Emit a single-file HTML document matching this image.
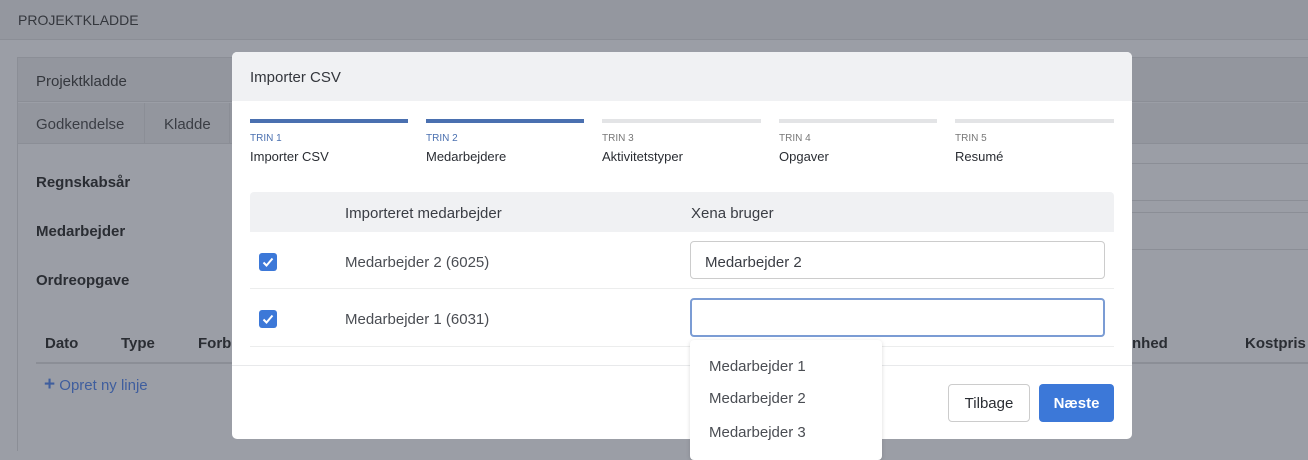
<!DOCTYPE html>
<html><head><meta charset="utf-8"><style>
*{box-sizing:border-box;margin:0;padding:0}
body{width:1308px;height:451px;overflow:hidden;background:#9b9ea6;font-family:"Liberation Sans",sans-serif;position:relative;color:#2a2d33}
.a{position:absolute}
</style></head><body>
<div class="a" style="left:0;top:0;width:1308px;height:40px;background:#94979f;border-bottom:1px solid #8b8e96"></div>
<div class="a" style="left:18px;top:12px;font-size:14px;color:#34373d">PROJEKTKLADDE</div>
<div class="a" style="left:17px;top:57px;width:1291px;height:394px;border-left:1px solid #8b8e96;border-top:1px solid #8b8e96"></div>
<div class="a" style="left:18px;top:58px;width:1290px;height:44px;background:#93969e;border-bottom:1px solid #8b8e96"></div>
<div class="a" style="left:36px;top:73px;font-size:15px;color:#34373d">Projektkladde</div>
<div class="a" style="left:18px;top:103px;width:1290px;height:41px;background:#93969e;border-bottom:1px solid #8b8e96"></div>
<div class="a" style="left:144px;top:103px;width:1px;height:41px;background:#8b8e96"></div>
<div class="a" style="left:229px;top:103px;width:1px;height:41px;background:#8b8e96"></div>
<div class="a" style="left:36px;top:116px;font-size:15px;color:#3a3d44">Godkendelse</div>
<div class="a" style="left:164px;top:116px;font-size:15px;color:#3a3d44">Kladde</div>
<div class="a" style="left:36px;top:174px;font-size:15px"><b>Regnskabsår</b></div>
<div class="a" style="left:36px;top:223px;font-size:15px"><b>Medarbejder</b></div>
<div class="a" style="left:36px;top:272px;font-size:15px"><b>Ordreopgave</b></div>
<div class="a" style="left:45px;top:335px;font-size:15px"><b>Dato</b></div>
<div class="a" style="left:121px;top:335px;font-size:15px"><b>Type</b></div>
<div class="a" style="left:198px;top:335px;font-size:15px"><b>Forb</b></div>
<div class="a" style="left:1132px;top:335px;font-size:15px"><b>nhed</b></div>
<div class="a" style="left:1245px;top:335px;font-size:15px"><b>Kostpris</b></div>
<div class="a" style="left:36px;top:362px;width:1272px;height:2px;background:#8b8e96"></div>
<div class="a" style="left:44px;top:377px;font-size:15px;color:#3f5e9e"><b style="font-size:19px;line-height:15px">+</b> Opret ny linje</div>
<div class="a" style="left:1132px;top:163px;width:176px;height:1px;background:#8b8e96"></div>
<div class="a" style="left:1132px;top:200px;width:176px;height:1px;background:#8b8e96"></div>
<div class="a" style="left:1132px;top:212px;width:176px;height:1px;background:#8b8e96"></div>
<div class="a" style="left:1132px;top:249px;width:176px;height:1px;background:#8b8e96"></div>

<div class="a" style="left:232px;top:52px;width:900px;height:387px;background:#fff;border-radius:5px;overflow:hidden">
 <div class="a" style="left:0;top:0;width:900px;height:49px;background:#f0f1f3"></div>
 <div class="a" style="left:18px;top:17px;font-size:15px;color:#33363c">Importer CSV</div>
 <div class="a" style="left:18px;top:67px;width:158px;height:4px;background:#4a70b0"></div>
 <div class="a" style="left:194px;top:67px;width:158px;height:4px;background:#4a70b0"></div>
 <div class="a" style="left:370px;top:67px;width:159px;height:4px;background:#e3e4e6"></div>
 <div class="a" style="left:547px;top:67px;width:158px;height:4px;background:#e3e4e6"></div>
 <div class="a" style="left:723px;top:67px;width:159px;height:4px;background:#e3e4e6"></div>
 <div class="a" style="left:18px;top:81px;font-size:10px;color:#4a70b0">TRIN 1</div>
 <div class="a" style="left:18px;top:97px;font-size:13px;color:#2a2d33">Importer CSV</div>
 <div class="a" style="left:194px;top:81px;font-size:10px;color:#4a70b0">TRIN 2</div>
 <div class="a" style="left:194px;top:97px;font-size:13px;color:#2a2d33">Medarbejdere</div>
 <div class="a" style="left:370px;top:81px;font-size:10px;color:#777">TRIN 3</div>
 <div class="a" style="left:370px;top:97px;font-size:13px;color:#2a2d33">Aktivitetstyper</div>
 <div class="a" style="left:547px;top:81px;font-size:10px;color:#777">TRIN 4</div>
 <div class="a" style="left:547px;top:97px;font-size:13px;color:#2a2d33">Opgaver</div>
 <div class="a" style="left:723px;top:81px;font-size:10px;color:#777">TRIN 5</div>
 <div class="a" style="left:723px;top:97px;font-size:13px;color:#2a2d33">Resumé</div>
 <div class="a" style="left:18px;top:140px;width:864px;height:40px;background:#f0f1f3;border-radius:4px 4px 0 0"></div>
 <div class="a" style="left:113px;top:153px;font-size:15px;color:#3a3d44">Importeret medarbejder</div>
 <div class="a" style="left:459px;top:153px;font-size:15px;color:#3a3d44">Xena bruger</div>
 <div class="a" style="left:18px;top:236px;width:864px;height:1px;background:#eceded"></div>
 <div class="a" style="left:18px;top:294px;width:864px;height:1px;background:#eceded"></div>
 <div class="a" style="left:0;top:313px;width:900px;height:1px;background:#e8e9eb"></div>
 <div class="a" style="left:27px;top:201px;width:18px;height:18px;background:#3c78d8;border-radius:3px"><svg width="18" height="18"><path d="M4.5 9.5l3 3 6-7" stroke="#fff" stroke-width="2" fill="none"/></svg></div>
 <div class="a" style="left:27px;top:258px;width:18px;height:18px;background:#3c78d8;border-radius:3px"><svg width="18" height="18"><path d="M4.5 9.5l3 3 6-7" stroke="#fff" stroke-width="2" fill="none"/></svg></div>
 <div class="a" style="left:113px;top:202px;font-size:15px;color:#4a4d53">Medarbejder 2 (6025)</div>
 <div class="a" style="left:113px;top:259px;font-size:15px;color:#4a4d53">Medarbejder 1 (6031)</div>
 <div class="a" style="left:458px;top:189px;width:415px;height:38px;border:1px solid #ccc;border-radius:4px"></div>
 <div class="a" style="left:473px;top:202px;font-size:15px;color:#3a3d44">Medarbejder 2</div>
 <div class="a" style="left:458px;top:246px;width:415px;height:39px;border:2px solid #7b9cd4;border-radius:4px"></div>
 <div class="a" style="left:716px;top:332px;width:82px;height:38px;border:1px solid #ccc;border-radius:4px;font-size:15px;text-align:center;line-height:38px;color:#2a2d33">Tilbage</div>
 <div class="a" style="left:807px;top:332px;width:75px;height:38px;background:#3c78d8;border-radius:4px;font-size:15px;text-align:center;line-height:39px;color:#fff;font-weight:bold">Næste</div>
</div>
<div class="a" style="left:690px;top:340px;width:192px;height:120px;background:#fff;border-radius:4px;box-shadow:0 1px 4px rgba(0,0,0,.15)">
 <div class="a" style="left:19px;top:18px;font-size:15px;color:#4a4d53">Medarbejder 1</div>
 <div class="a" style="left:19px;top:50px;font-size:15px;color:#4a4d53">Medarbejder 2</div>
 <div class="a" style="left:19px;top:84px;font-size:15px;color:#4a4d53">Medarbejder 3</div>
</div>
</body></html>
